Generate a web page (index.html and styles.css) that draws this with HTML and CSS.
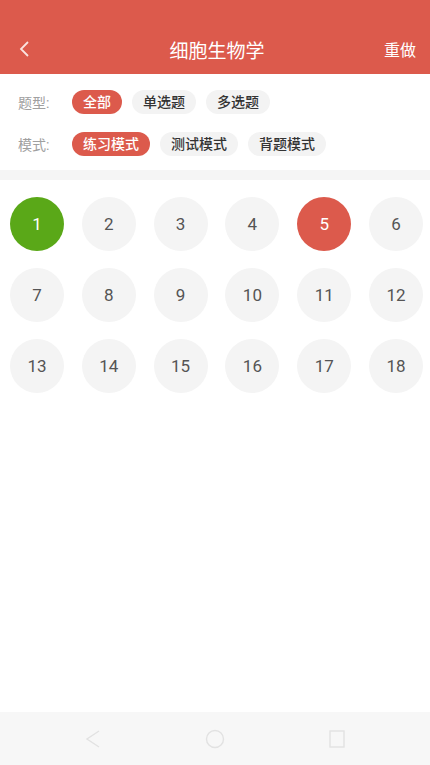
FILE: index.html
```html
<!DOCTYPE html>
<html lang="zh-CN">

<head>
    <meta charset="UTF-8">
    <meta name="viewport" content="width=device-width, initial-scale=1.0">
    <title>细胞生物学</title>
    <link rel="stylesheet" href="styles.css">
</head>

<body>
    <div class="page">
        <div class="header">
            <a href="javascript:;" class="back">
                <svg width="14" height="18" viewBox="0 0 14 18"><path d="M10 2 L3 9 L10 16" fill="none" stroke="#fbe3df" stroke-width="1.8" /></svg>
            </a>
            <div class="title">细胞生物学</div>
            <a href="javascript:;" class="redo">重做</a>
        </div>

        <div class="filter">
            <div class="filter-row">
                <span class="filter-label">题型:</span>
                <a href="javascript:;" class="chip active">全部</a>
                <a href="javascript:;" class="chip">单选题</a>
                <a href="javascript:;" class="chip">多选题</a>
            </div>
            <div class="filter-row">
                <span class="filter-label">模式:</span>
                <a href="javascript:;" class="chip active">练习模式</a>
                <a href="javascript:;" class="chip">测试模式</a>
                <a href="javascript:;" class="chip">背题模式</a>
            </div>
        </div>

        <div class="sep"></div>

        <div class="grid">
            <a href="javascript:;" class="num right">1</a>
            <a href="javascript:;" class="num">2</a>
            <a href="javascript:;" class="num">3</a>
            <a href="javascript:;" class="num">4</a>
            <a href="javascript:;" class="num wrong">5</a>
            <a href="javascript:;" class="num">6</a>
            <a href="javascript:;" class="num">7</a>
            <a href="javascript:;" class="num">8</a>
            <a href="javascript:;" class="num">9</a>
            <a href="javascript:;" class="num">10</a>
            <a href="javascript:;" class="num">11</a>
            <a href="javascript:;" class="num">12</a>
            <a href="javascript:;" class="num">13</a>
            <a href="javascript:;" class="num">14</a>
            <a href="javascript:;" class="num">15</a>
            <a href="javascript:;" class="num">16</a>
            <a href="javascript:;" class="num">17</a>
            <a href="javascript:;" class="num">18</a>
        </div>

        <!-- 系统导航栏 -->
        <div class="navbar">
            <svg width="22" height="22" viewBox="0 0 22 22"><path d="M17 3 L5 11 L17 19" fill="none" stroke="#e2e2e2" stroke-width="1.4" /></svg>
            <svg width="22" height="22" viewBox="0 0 22 22"><circle cx="11" cy="11" r="8.5" fill="none" stroke="#e2e2e2" stroke-width="1.4" /></svg>
            <svg width="22" height="22" viewBox="0 0 22 22"><rect x="4" y="3" width="14" height="16" fill="none" stroke="#e2e2e2" stroke-width="1.4" /></svg>
        </div>
    </div>
</body>

</html>
```

FILE: styles.css
```css
* {
    margin: 0;
    padding: 0;
    box-sizing: border-box;
}

a {
    text-decoration: none;
    color: #333;
}

body {
    font-family: Roboto, "Noto Sans CJK SC", sans-serif;
    background-color: #fff;
}

.page {
    display: flex;
    flex-direction: column;
    height: 100vh;
}

.header {
    display: flex;
    align-items: center;
    height: 74px;
    padding: 24px 14px 0 18px;
    background-color: #dc5a4c;
    color: #fff;
}

.header .back {
    display: flex;
    width: 60px;
}

.header .title {
    flex: 1;
    text-align: center;
    font-size: 19px;
    color: #fff;
}

.header .redo {
    width: 60px;
    text-align: right;
    font-size: 16px;
    color: #fff;
}

.filter {
    padding: 16px 18px 14px;
}

.filter-row {
    display: flex;
    align-items: center;
    gap: 10px;
}

.filter-row + .filter-row {
    margin-top: 18px;
}

.filter-label {
    width: 44px;
    font-size: 14px;
    color: #a0a0a0;
}

.chip {
    height: 24px;
    line-height: 24px;
    padding: 0 11px;
    font-size: 14px;
    font-weight: 500;
    color: #333;
    background-color: #f3f3f3;
    border-radius: 12px;
}

.chip.active {
    color: #fff;
    background-color: #dc5a4c;
}

.sep {
    height: 10px;
    background-color: #f5f5f5;
}

.grid {
    display: grid;
    grid-template-columns: repeat(6, 54px);
    column-gap: 17.8px;
    row-gap: 17px;
    padding: 17px 0 0 10px;
}

.num {
    display: flex;
    align-items: center;
    justify-content: center;
    width: 54px;
    height: 54px;
    font-size: 17px;
    color: #555;
    background-color: #f4f4f4;
    border-radius: 50%;
}

.num.right {
    color: #fff;
    background-color: #5aa818;
}

.num.wrong {
    color: #fff;
    background-color: #dc5a4c;
}

.navbar {
    display: flex;
    justify-content: center;
    align-items: center;
    gap: 100px;
    height: 53px;
    margin-top: auto;
    background-color: #f7f7f7;
}
```
